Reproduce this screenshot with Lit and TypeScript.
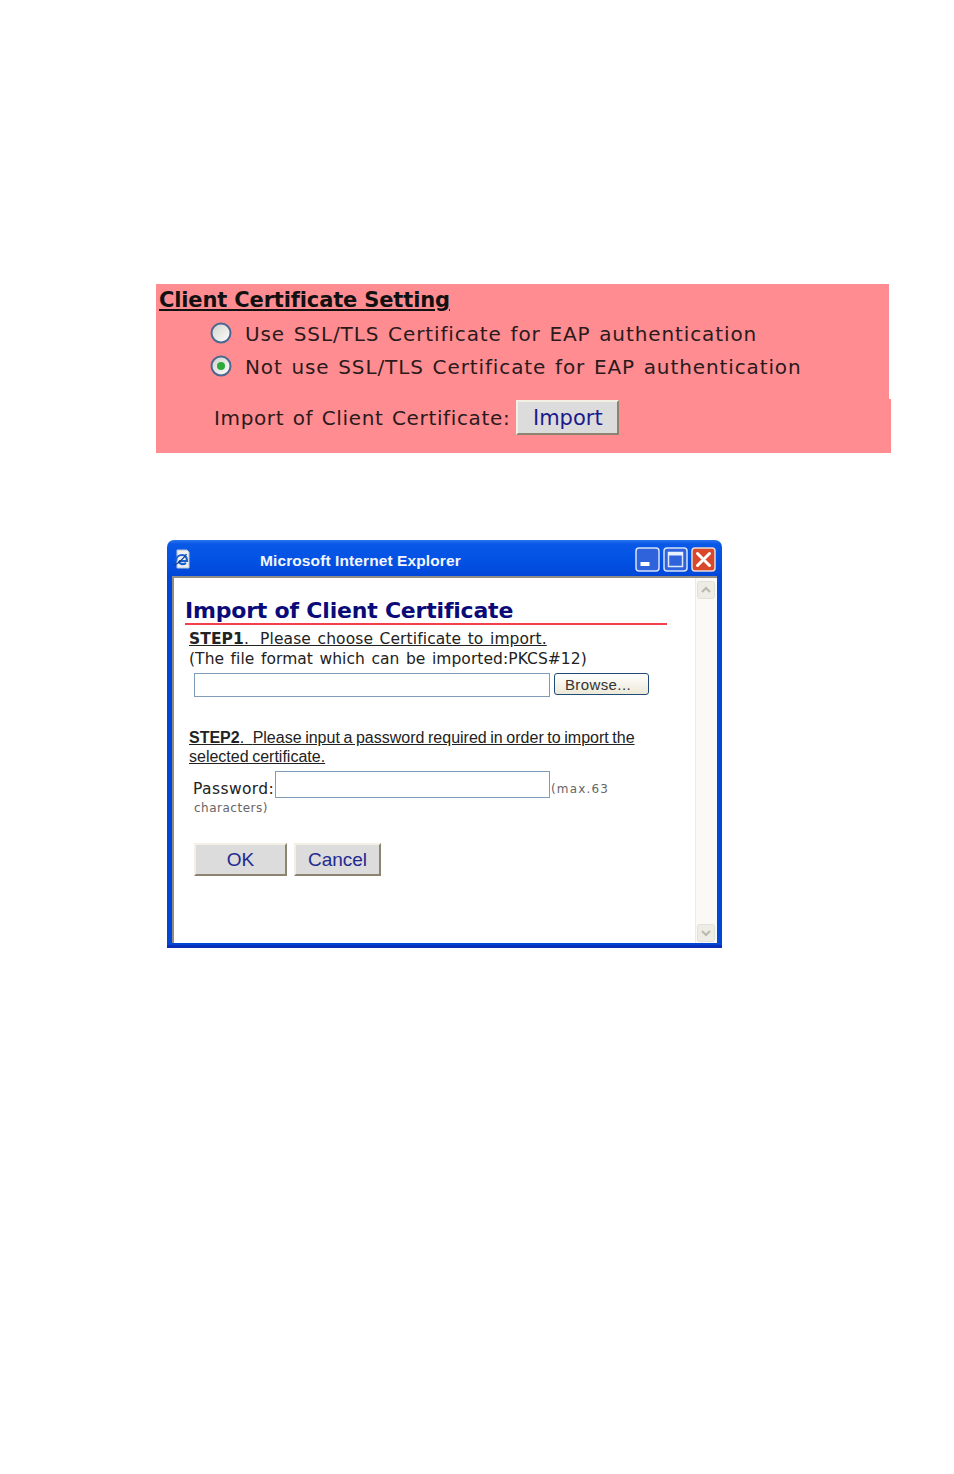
import { LitElement, html, css, svg } from "lit";
import { customElement } from "lit/decorators.js";

@customElement("app-root")
export class AppRoot extends LitElement {
  static styles = css`
    :host {
      display: block;
      width: 954px;
      height: 1474px;
      background: #fff;
      overflow: hidden;
      font-family: "DejaVu Sans", Verdana, sans-serif;
      color: #2a1a1c;
    }
    .page { padding: 284px 0 0 156px; display: flex; flex-direction: column; }
    .panel { display: flex; flex-direction: column; width: 735px; }
    .panel-top {
      width: 733px;
      height: 115px;
      background: #ff8c90;
      box-sizing: border-box;
      padding-left: 3px;
      display: flex;
      flex-direction: column;
    }
    .panel-bottom {
      height: 54px;
      background: #ff8c90;
      display: flex;
      align-items: flex-start;
      padding-left: 58px;
      box-sizing: border-box;
    }
    h2 {
      margin: 0;
      height: 33px;
      font-size: 21px;
      line-height: 32px;
      font-weight: 700;
      text-decoration: underline;
      color: #111;
      letter-spacing: -0.15px;
    }
    .radio-row {
      display: flex;
      align-items: center;
      height: 33px;
      margin-left: 51px;
      gap: 13px;
      font-size: 20px;
      letter-spacing: 0.89px;
      word-spacing: 1.5px;
    }
    .radio { width: 22px; height: 22px; flex: none; display: block; margin-bottom: 2px; }
    .import-label {
      font-size: 20px;
      letter-spacing: 0.64px;
      word-spacing: 1.5px;
      line-height: 38px;
      margin-right: 6px;
    }
    .xp-btn {
      box-sizing: border-box;
      background: #dcdcdc;
      border: 2px solid;
      border-color: #f5f0e6 #8a8470 #8a8470 #f5f0e6;
      color: #1a1a8c;
      font-family: inherit;
      padding: 0;
      display: flex;
      align-items: center;
      justify-content: center;
    }
    .import-btn { width: 103px; height: 35px; font-size: 21px; margin-top: 1px; }
    .spacer { height: 87px; }

    .win {
      width: 555px;
      height: 408px;
      margin-left: 11px;
      box-sizing: border-box;
      background: linear-gradient(180deg, #2a74f0 0, #0a58e6 4px, #0352e4 20px, #0047d8 36px);
      border-radius: 7px 7px 0 0;
      padding: 0 5px 5px;
      display: flex;
      flex-direction: column;
      box-shadow: inset 0 -3px 0 #0a2fb8;
    }
    .title {
      height: 36px;
      flex: none;
      display: flex;
      align-items: center;
      color: #f2f6ff;
      font-size: 15.5px;
      font-weight: 700;
      font-family: "Liberation Sans", Arial, sans-serif;
      letter-spacing: 0.1px;
    }
    .ie { width: 18px; height: 20px; margin-left: 1px; flex: none; margin-top: 2px; }
    .title-text { margin-left: 69px; flex: 1; padding-top: 6px; }
    .ctrls { display: flex; gap: 3px; margin-right: 1px; margin-top: 3px; }
    .ctrl { width: 25px; height: 25px; display: block; }
    .client {
      flex: 1;
      display: flex;
      background: #fff;
      border: 2px solid #8f8d84;
      border-right: 0;
      border-bottom: 0;
      min-height: 0;
    }
    .content {
      flex: 1;
      padding: 19px 0 0 11px;
      display: flex;
      flex-direction: column;
      min-width: 0;
    }
    h1 {
      margin: 0;
      width: 482px;
      height: 28px;
      font-family: "DejaVu Sans", sans-serif;
      font-size: 22px;
      line-height: 28px;
      font-weight: 700;
      color: #0a0a78;
      border-bottom: 2px solid #f4404c;
      letter-spacing: -0.2px;
      box-sizing: border-box;
    }
    .body { margin-left: 4px; color: #222; }
    .step1 {
      font-size: 15.5px;
      line-height: 19px;
      letter-spacing: 0.1px;
      word-spacing: 1.5px;
      text-decoration: underline;
      margin-top: 5px;
    }
    .tight { word-spacing: 0.5px; }
    .fmt { font-size: 15.5px; line-height: 19px; letter-spacing: 0.06px; word-spacing: 1.5px; margin-top: 1px; }
    .file-row { display: flex; gap: 4px; margin: 4px 0 0 5px; align-items: center; }
    .text-input {
      box-sizing: border-box;
      background: #fff;
      border: 1px solid #7f9db9;
      display: block;
    }
    .file-input { width: 356px; height: 24px; }
    .browse {
      width: 95px;
      height: 22px;
      box-sizing: border-box;
      border: 1px solid #1f4d78;
      border-radius: 3px;
      background: linear-gradient(180deg, #fff, #ece9d8);
      font-size: 15px;
      font-family: "Liberation Sans", Arial, sans-serif;
      letter-spacing: 0.4px;
      color: #333;
      display: flex;
      align-items: center;
      justify-content: center;
      padding: 0 7px 0 0;
      margin-bottom: 2px;
    }
    .step2 {
      margin-top: 31px;
      width: 470px;
      font-family: "Liberation Sans", Arial, sans-serif;
      font-size: 16px;
      line-height: 19px;
      text-decoration: underline;
      word-spacing: -0.85px;
    }
    .step2 .tight { word-spacing: -0.2px; }
    .pw-row { display: flex; align-items: center; margin: 5px 0 0 5px; height: 27px; }
    .pw-label { font-size: 15.5px; letter-spacing: 0.4px; width: 81px; flex: none; margin: 9px 0 0 -1px; }
    .pw-input { width: 275px; height: 27px; flex: none; margin-left: 1px; }
    .max { font-size: 12px; color: #666; letter-spacing: 1.15px; margin: 9px 0 0 1px; }
    .chars { font-size: 12px; color: #666; letter-spacing: 0.5px; margin: 2px 0 0 5px; line-height: 16px; }
    .btns { display: flex; gap: 7px; margin: 27px 0 0 5px; }
    .btns .xp-btn { height: 33px; font-size: 19px; color: #222a90; font-family: "Liberation Sans", Arial, sans-serif; }
    .ok { width: 93px; }
    .cancel { width: 87px; }
    .scroll {
      width: 22px;
      flex: none;
      background: #faf9f5;
      display: flex;
      flex-direction: column;
      justify-content: space-between;
      align-items: center;
      padding: 3px 0 1px;
      box-sizing: border-box;
      border-left: 1px solid #ecebe3;
    }
    .sb { width: 18px; height: 18px; display: block; margin-right: 2px; }
  `;

  private radio(checked: boolean) {
    return html`<svg class="radio" viewBox="0 0 22 22" aria-hidden="true">
      <defs>
        <linearGradient id="rg${checked ? 1 : 0}" x1="0" y1="0" x2="1" y2="1">
          <stop offset="0" stop-color="#d0d0ca"></stop>
          <stop offset="1" stop-color="#ffffff"></stop>
        </linearGradient>
      </defs>
      <circle cx="11" cy="11" r="9.5" fill="url(#rg${checked ? 1 : 0})" stroke="#4a6890" stroke-width="2"></circle>
      ${checked ? svg`<circle cx="11" cy="11" r="4" fill="#2fa83c"></circle>` : ""}
    </svg>`;
  }

  render() {
    return html`
      <div class="page">
        <section class="panel">
          <div class="panel-top">
            <h2>Client Certificate Setting</h2>
            <div class="radio-row">${this.radio(false)}<span>Use SSL/TLS Certificate for EAP authentication</span></div>
            <div class="radio-row">${this.radio(true)}<span>Not use SSL/TLS Certificate for EAP authentication</span></div>
          </div>
          <div class="panel-bottom">
            <span class="import-label">Import of Client Certificate:</span>
            <button class="xp-btn import-btn">Import</button>
          </div>
        </section>
        <div class="spacer"></div>
        <section class="win">
          <header class="title">
            <svg class="ie" viewBox="0 0 18 20" aria-hidden="true">
              <path d="M4 1h10l2 2v16H4z" fill="#eef0f2" stroke="#b9c2cc" stroke-width="1"></path>
              <path d="M3 12c0-4 3-6 6-6s5 2 5 6H6" fill="none" stroke="#1c62cc" stroke-width="2.2"></path>
              <path d="M6 12c0 3 4 4 7 2" fill="none" stroke="#1c62cc" stroke-width="2.2"></path>
              <path d="M0.5 16c3 0 10-6 13-11" fill="none" stroke="#123f8c" stroke-width="1.3"></path>
            </svg>
            <span class="title-text">Microsoft Internet Explorer</span>
            <div class="ctrls">
              <svg class="ctrl" viewBox="0 0 25 25" aria-hidden="true">
                <rect x="1" y="1" width="23" height="23" rx="3" fill="#2f63dc" stroke="#d5e2fa" stroke-width="1.5"></rect>
                <rect x="5.5" y="15" width="9" height="4" fill="#fff"></rect>
              </svg>
              <svg class="ctrl" viewBox="0 0 25 25" aria-hidden="true">
                <rect x="1" y="1" width="23" height="23" rx="3" fill="#2f63dc" stroke="#d5e2fa" stroke-width="1.5"></rect>
                <rect x="5.5" y="5.5" width="14" height="14" fill="none" stroke="#dde8ff" stroke-width="1.5"></rect>
                <rect x="5" y="5" width="15" height="3.5" fill="#e8f0ff"></rect>
              </svg>
              <svg class="ctrl" viewBox="0 0 25 25" aria-hidden="true">
                <rect x="1" y="1" width="23" height="23" rx="3" fill="#d9482a" stroke="#e8dcd4" stroke-width="1.5"></rect>
                <path d="M6.5 6.5l12 12M18.5 6.5l-12 12" stroke="#fff" stroke-width="3" stroke-linecap="round"></path>
              </svg>
            </div>
          </header>
          <div class="client">
            <div class="content">
              <h1>Import of Client Certificate</h1>
              <div class="body">
                <div class="step1"><b>STEP1</b>.<span class="tight">&nbsp; </span>Please choose Certificate to import.</div>
                <div class="fmt">(The file format which can be imported:PKCS#12)</div>
                <div class="file-row">
                  <div class="text-input file-input"></div>
                  <button class="browse">Browse...</button>
                </div>
                <div class="step2"><b>STEP2</b>.<span class="tight">&nbsp; </span>Please input a password required in order to import the selected certificate.</div>
                <div class="pw-row">
                  <span class="pw-label">Password:</span>
                  <div class="text-input pw-input"></div>
                  <span class="max">(max.63</span>
                </div>
                <div class="chars">characters)</div>
                <div class="btns">
                  <button class="xp-btn ok">OK</button>
                  <button class="xp-btn cancel">Cancel</button>
                </div>
              </div>
            </div>
            <div class="scroll">
              <svg class="sb" viewBox="0 0 18 18" aria-hidden="true">
                <rect x="0.5" y="0.5" width="17" height="17" rx="2" fill="#eeede5" stroke="#e2e1d8"></rect>
                <path d="M5 11l4-4 4 4" fill="none" stroke="#b8b8ac" stroke-width="2"></path>
              </svg>
              <svg class="sb" viewBox="0 0 18 18" aria-hidden="true">
                <rect x="0.5" y="0.5" width="17" height="17" rx="2" fill="#eeede5" stroke="#e2e1d8"></rect>
                <path d="M5 7l4 4 4-4" fill="none" stroke="#b8b8ac" stroke-width="2"></path>
              </svg>
            </div>
          </div>
        </section>
      </div>
    `;
  }
}
